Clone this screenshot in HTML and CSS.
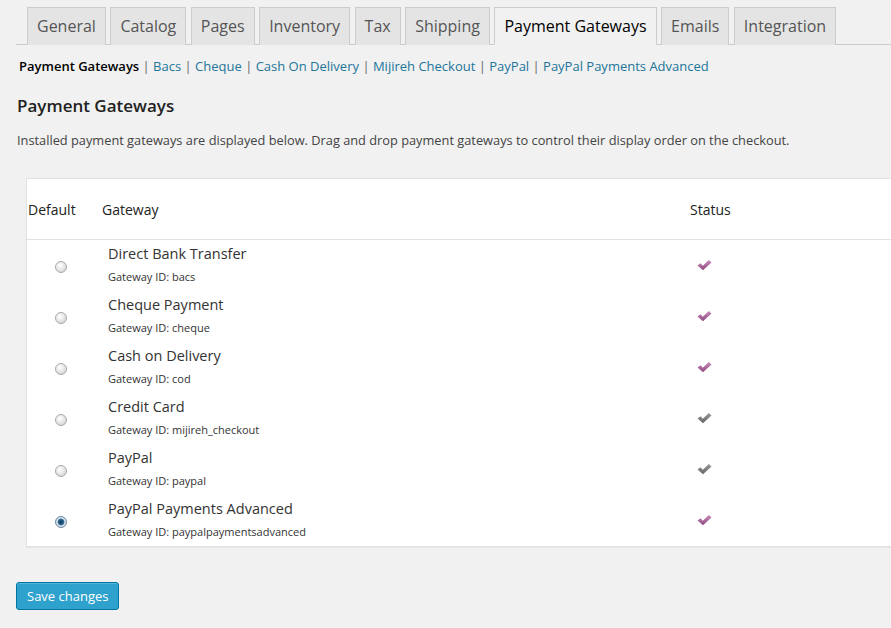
FILE: index.html
```html
<!DOCTYPE html>
<html lang="en">
<head>
    <meta charset="UTF-8">
    <meta name="viewport" content="width=device-width, initial-scale=1.0">
    <title>Payment Gateways</title>
    <link rel="stylesheet" href="styles.css">
</head>
<body>

<div class="wrap">
    <h2 class="nav-tab-wrapper">
        <a class="nav-tab">General</a>
        <a class="nav-tab">Catalog</a>
        <a class="nav-tab">Pages</a>
        <a class="nav-tab">Inventory</a>
        <a class="nav-tab">Tax</a>
        <a class="nav-tab">Shipping</a>
        <a class="nav-tab nav-tab-active">Payment Gateways</a>
        <a class="nav-tab">Emails</a>
        <a class="nav-tab">Integration</a>
    </h2>

    <ul class="subsubsub">
        <li><a class="current">Payment Gateways</a> | </li>
        <li><a>Bacs</a> | </li>
        <li><a>Cheque</a> | </li>
        <li><a>Cash On Delivery</a> | </li>
        <li><a>Mijireh Checkout</a> | </li>
        <li><a>PayPal</a> | </li>
        <li><a>PayPal Payments Advanced</a></li>
    </ul>

    <h3 class="section-title">Payment Gateways</h3>
    <p class="intro">Installed payment gateways are displayed below. Drag and drop payment gateways to control their display order on the checkout.</p>

    <table class="gateways">
        <thead>
            <tr>
                <th class="col-default">Default</th>
                <th class="col-gateway">Gateway</th>
                <th class="col-status">Status</th>
            </tr>
        </thead>
        <tbody>
            <!-- rows are filled in by the script below -->
        </tbody>
    </table>

    <button class="button-primary">Save changes</button>
</div>

<svg width="0" height="0" class="defs">
    <defs>
        <linearGradient id="check-on" x1="0" y1="0" x2="0" y2="1">
            <stop offset="0" stop-color="#c98bbb"/>
            <stop offset="1" stop-color="#8f4a80"/>
        </linearGradient>
        <linearGradient id="check-off" x1="0" y1="0" x2="0" y2="1">
            <stop offset="0" stop-color="#9a9a9a"/>
            <stop offset="1" stop-color="#666"/>
        </linearGradient>
    </defs>
</svg>

<script>
    const gateways = [
        { name: 'Direct Bank Transfer', id: 'bacs', enabled: true },
        { name: 'Cheque Payment', id: 'cheque', enabled: true },
        { name: 'Cash on Delivery', id: 'cod', enabled: true },
        { name: 'Credit Card', id: 'mijireh_checkout', enabled: false },
        { name: 'PayPal', id: 'paypal', enabled: false },
        { name: 'PayPal Payments Advanced', id: 'paypalpaymentsadvanced', enabled: true, isDefault: true }
    ];

    const tbody = document.querySelector('.gateways tbody');

    gateways.forEach(gateway => {
        const row = document.createElement('tr');
        row.innerHTML = `
            <td class="col-default"><input type="radio" name="default_gateway" value="${gateway.id}" ${gateway.isDefault ? 'checked' : ''}></td>
            <td class="col-gateway">
                <strong>${gateway.name}</strong>
                <span class="gateway-id">Gateway ID: ${gateway.id}</span>
            </td>
            <td class="col-status">
                <svg class="status" width="15" height="12" viewBox="0 0 15 12">
                    <path fill="url(#${gateway.enabled ? 'check-on' : 'check-off'})" d="M0.5 6.5 L3.6 4.3 L5.8 6.8 L11.8 1 L14.5 3.4 L6 11.2 Z"/>
                </svg>
            </td>
        `;
        tbody.appendChild(row);
    });
</script>

</body>
</html>
```

FILE: styles.css
```css
html, body {
    overflow: hidden;
}
body {
    margin: 0;
    background-color: #f1f1f1;
    font-family: "Open Sans", sans-serif;
    color: #444;
    font-size: 13px;
}
.defs {
    position: absolute;
}
.wrap {
    padding: 7px 0 0 16px;
}
.nav-tab-wrapper {
    margin: 0;
    padding: 0 0 0 11px;
    border-bottom: 1px solid #ccc;
    display: flex;
    gap: 4.5px;
    font-weight: normal;
}
.nav-tab {
    display: block;
    padding: 6px 9px;
    font-size: 16px;
    line-height: 24px;
    color: #555;
    background-color: #e4e4e4;
    border: 1px solid #ccc;
    border-bottom: none;
    margin-bottom: -1px;
}
.nav-tab-active {
    background-color: #f1f1f1;
    color: #000;
    border-bottom: 1px solid #f1f1f1;
}
.subsubsub {
    list-style: none;
    margin: 12px 0 0 3px;
    padding: 0;
    display: flex;
    color: #666;
    line-height: 18px;
}
.subsubsub li {
    white-space: pre;
}
.subsubsub a {
    color: #21759b;
}
.subsubsub a.current {
    color: #000;
    font-weight: 600;
}
.section-title {
    margin: 19px 0 0 1px;
    font-size: 17px;
    font-weight: 600;
    color: #222;
    line-height: 24px;
}
.intro {
    margin: 12px 0 0 1px;
    font-size: 12.8px;
    line-height: 20px;
}
.gateways {
    margin: 28px 0 0 10px;
    width: 890px;
    border-collapse: collapse;
    background-color: #fff;
    border: 1px solid #e1e1e1;
    box-shadow: 0 1px 1px rgba(0, 0, 0, 0.04);
}
.gateways thead tr {
    height: 61px;
}
.gateways tbody tr {
    height: 51px;
}
.gateways tbody tr:last-child {
    height: 52px;
}
.gateways th {
    text-align: left;
    font-weight: normal;
    font-size: 14px;
    color: #222;
    border-bottom: 1px solid #e1e1e1;
    padding: 0;
}
.gateways td {
    padding: 0;
    vertical-align: middle;
}
.gateways .col-default {
    width: 68px;
    padding: 0 1px 0 1px;
}
.gateways td.col-default {
    text-align: center;
    padding: 0 2px 0 0;
}
.gateways th.col-gateway {
    padding-left: 5px;
}
.gateways td.col-gateway {
    vertical-align: top;
    padding: 4px 0 0 11px;
}
.gateways .col-status {
    width: 218px;
}
.gateways td.col-status {
    padding-left: 7px;
}
.col-gateway strong {
    display: block;
    font-weight: normal;
    font-size: 14.5px;
    color: #333;
    line-height: 20px;
}
.gateway-id {
    display: block;
    font-size: 11px;
    color: #333;
    line-height: 16px;
    margin-top: 5px;
}
input[type="radio"] {
    appearance: none;
    width: 12px;
    height: 12px;
    margin: 0;
    border-radius: 50%;
    border: 1px solid #aaa;
    background: radial-gradient(circle at 40% 35%, #fff 0, #e6e6e6 50%, #c8c8c8 100%);
    vertical-align: middle;
}
input[type="radio"]:checked {
    border-color: #6d8aa3;
    background: radial-gradient(circle at 50% 50%, #0f3452 0, #2d6b99 40%, #dfe6ec 55%, #b9c4cd 100%);
}
.status {
    display: block;
}
.button-primary {
    margin-top: 35px;
    font-family: "Open Sans", sans-serif;
    font-size: 13px;
    line-height: 26px;
    height: 28px;
    padding: 0 10px;
    color: #fff;
    background-color: #2ea2cc;
    border: 1px solid #0074a2;
    border-radius: 3px;
    box-shadow: inset 0 1px 0 rgba(120, 200, 230, 0.5);
}
```
